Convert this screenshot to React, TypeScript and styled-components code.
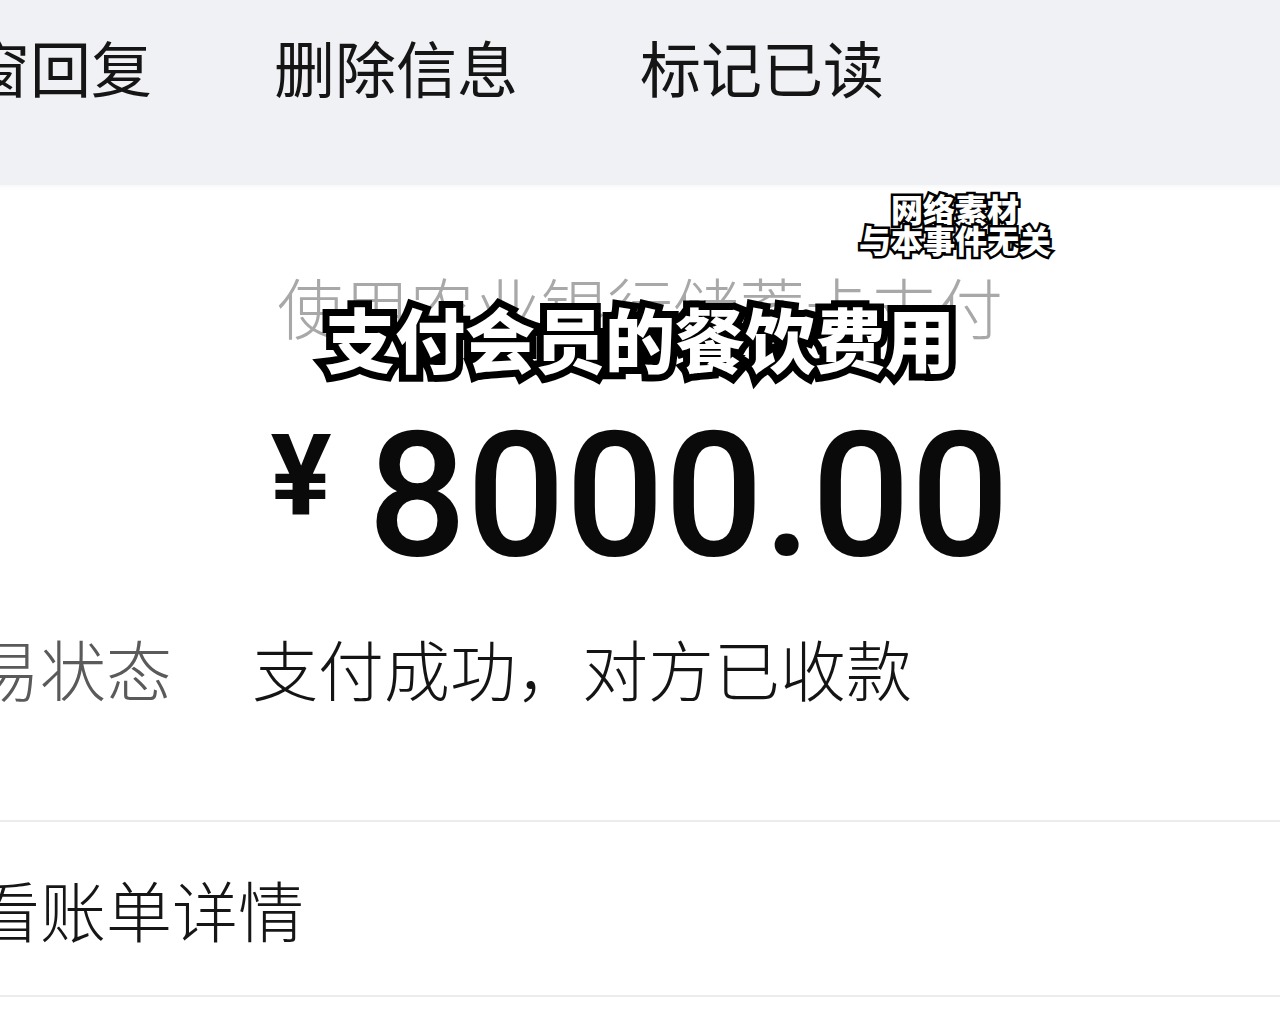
import React from 'react';
import styled, { createGlobalStyle } from 'styled-components';

const GlobalStyle = createGlobalStyle`
  html, body {
    margin: 0;
    padding: 0;
    background: #ffffff;
    overflow: hidden;
  }
  body {
    font-family: "Noto Sans CJK SC", "Noto Sans", sans-serif;
  }
`;

const Viewport = styled.div`
  position: relative;
  width: 1280px;
  height: 1028px;
  overflow: hidden;
  background: #ffffff;
`;

// the phone screen is zoomed in, so it runs past the left edge of the frame
const Screen = styled.div`
  width: 1464px;
  margin-left: -92px;
  display: flex;
  flex-direction: column;
`;

const ActionBar = styled.div`
  height: 185px;
  box-sizing: border-box;
  padding-top: 30px;
  display: flex;
  gap: 122px;
  background: #f0f1f4;
  box-shadow: 0 2px 4px rgba(0, 0, 0, 0.035);
`;

const Action = styled.span`
  font-size: 61px;
  line-height: 73px;
  font-weight: 400;
  color: #151515;
`;

const Summary = styled.section`
  height: 635px;
  box-sizing: border-box;
  padding-top: 81px;
  display: flex;
  flex-direction: column;
`;

const Method = styled.div`
  text-align: center;
  font-size: 66px;
  line-height: 79px;
  font-weight: 300;
  color: #a8a8a8;
`;

const Amount = styled.div`
  margin-top: 64px;
  height: 176px;
  display: flex;
  justify-content: center;
  align-items: flex-start;
  font-family: Roboto, "Liberation Sans", sans-serif;
  color: #0a0a0a;
`;

const Currency = styled.span`
  font-size: 114px;
  line-height: 1;
  font-weight: 700;
  margin-top: 10px;
  margin-right: 36px;
`;

const Figure = styled.span`
  font-size: 174px;
  line-height: 1;
  font-weight: 500;
`;

const StatusRow = styled.div`
  margin-top: 43px;
  display: flex;
  gap: 80px;
  font-size: 66px;
  line-height: 79px;
  font-weight: 300;
`;

const Label = styled.span`
  color: #5a5a5a;
`;

const Value = styled.span`
  color: #141414;
`;

const Divider = styled.div`
  height: 2px;
  background: #ececec;
`;

const LinkRow = styled.div`
  height: 173px;
  display: flex;
  align-items: center;
  font-size: 66px;
  line-height: 79px;
  font-weight: 300;
  color: #161616;
`;

const Filler = styled.div`
  height: 60px;
  background: #ffffff;
`;

const Caption = styled.div`
  position: absolute;
  top: 295px;
  left: 0;
  right: 0;
  text-align: center;
  font-size: 70px;
  line-height: 86px;
  font-weight: 900;
  color: #ffffff;
  -webkit-text-stroke: 14px #000000;
  paint-order: stroke fill;
`;

const Notice = styled.div`
  position: absolute;
  top: 193px;
  left: 845px;
  width: 220px;
  text-align: center;
  font-size: 32px;
  line-height: 31px;
  font-weight: 900;
  color: #ffffff;
  -webkit-text-stroke: 5px #000000;
  paint-order: stroke fill;
`;

const actions = ['弹窗回复', '删除信息', '标记已读'];

const App: React.FC = (): JSX.Element => {
  return (
    <Viewport>
      <GlobalStyle />
      <Screen>
        <ActionBar>
          {actions.map((action) => (
            <Action key={action}>{action}</Action>
          ))}
        </ActionBar>
        <Summary>
          <Method>使用农业银行储蓄卡支付</Method>
          <Amount>
            <Currency>¥</Currency>
            <Figure>8000.00</Figure>
          </Amount>
          <StatusRow>
            <Label>交易状态</Label>
            <Value>支付成功，对方已收款</Value>
          </StatusRow>
        </Summary>
        <Divider />
        <LinkRow>查看账单详情</LinkRow>
        <Divider />
        <Filler />
      </Screen>
      <Notice>
        网络素材
        <br />
        与本事件无关
      </Notice>
      <Caption>支付会员的餐饮费用</Caption>
    </Viewport>
  );
};

export default App;
